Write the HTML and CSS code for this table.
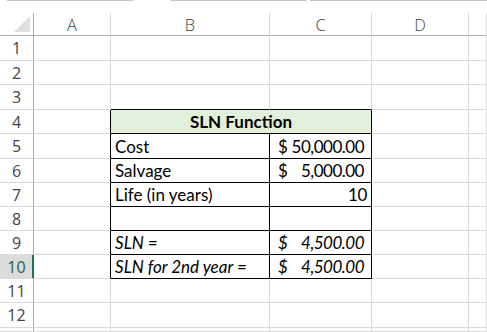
FILE: index.html
```html
<!DOCTYPE html>
<html>
<head>
<meta charset="utf-8">
<link rel="stylesheet" href="styles.css">
</head>
<body>
<div class="topbar"><div class="seg s1"></div><div class="seg s2"></div><div class="seg s3"></div></div>
<div class="sheet">
  <div class="c h corner"><div class="tri"></div></div>
  <div class="c h">A</div><div class="c h">B</div><div class="c h">C</div><div class="c h">D</div><div class="c h"></div>

  <div class="c r">1</div><div class="c"></div><div class="c"></div><div class="c"></div><div class="c"></div><div class="c"></div>
  <div class="c r">2</div><div class="c"></div><div class="c"></div><div class="c"></div><div class="c"></div><div class="c"></div>
  <div class="c r">3</div><div class="c"></div><div class="c bt"></div><div class="c bt"></div><div class="c"></div><div class="c"></div>

  <div class="c r">4</div><div class="c bl"></div><div class="c t title">SLN Function</div><div class="c"></div><div class="c"></div>

  <div class="c r">5</div><div class="c bl"></div><div class="c t txt">Cost</div><div class="c t acc"><span>$</span><span>50,000.00</span></div><div class="c"></div><div class="c"></div>
  <div class="c r">6</div><div class="c bl"></div><div class="c t txt">Salvage</div><div class="c t acc"><span>$</span><span>5,000.00</span></div><div class="c"></div><div class="c"></div>
  <div class="c r">7</div><div class="c bl"></div><div class="c t txt">Life (in years)</div><div class="c t num">10</div><div class="c"></div><div class="c"></div>
  <div class="c r">8</div><div class="c bl"></div><div class="c t txt"></div><div class="c t"></div><div class="c"></div><div class="c"></div>
  <div class="c r">9</div><div class="c bl"></div><div class="c t txt it">SLN =</div><div class="c t acc it"><span>$</span><span>4,500.00</span></div><div class="c"></div><div class="c"></div>
  <div class="c r sel">10</div><div class="c bl"></div><div class="c t txt it">SLN for 2nd year =</div><div class="c t acc it"><span>$</span><span>4,500.00</span></div><div class="c"></div><div class="c"></div>

  <div class="c r">11</div><div class="c"></div><div class="c"></div><div class="c"></div><div class="c"></div><div class="c"></div>
  <div class="c r">12</div><div class="c"></div><div class="c"></div><div class="c"></div><div class="c"></div><div class="c"></div>
  <div class="c r"></div><div class="c"></div><div class="c"></div><div class="c"></div><div class="c"></div><div class="c"></div>
</div>
</body>
</html>
```
FILE: styles.css
```css
html, body {
  margin: 0;
  padding: 0;
  background: #fff;
  overflow: hidden;
  width: 487px;
  height: 332px;
}
.topbar {
  height: 13px;
  display: flex;
  box-sizing: border-box;
}
.seg {
  border-top: 1px solid #c6c6c6;
  height: 0;
}
.s1 { margin-left: 7px; width: 126px; }
.s2 { margin-left: 37px; width: 137px; }
.s3 { margin-left: 3px; flex: 1; }

.sheet {
  display: grid;
  grid-template-columns: 34px 77px 159px 102px 97px 1fr;
  grid-template-rows: 23px 25px 24px 25px 24px 25px 24px 24px 24px 24px 24px 24px 25px 4px;
}
.c {
  box-sizing: border-box;
  border-right: 1px solid #dadada;
  border-bottom: 1px solid #dadada;
  font-family: Lato, "Liberation Sans", sans-serif;
  font-size: 17px;
  color: #000;
  min-width: 0;
  overflow: hidden;
  white-space: nowrap;
}
.h {
  border-bottom: 1px solid #ababab;
  display: flex;
  align-items: center;
  justify-content: center;
  font-family: "Open Sans", "Noto Sans", sans-serif;
  font-weight: 300;
  font-size: 16.5px;
  color: #444;
}
.corner {
  border-right: 1px solid #ababab;
  position: relative;
}
.tri {
  position: absolute;
  left: 14px;
  top: 3px;
  width: 16px;
  height: 16px;
  background: #dfdfdf;
  clip-path: polygon(100% 0, 100% 100%, 0 100%);
}
.r {
  border-right: 1px solid #ababab;
  display: flex;
  align-items: center;
  justify-content: center;
  font-family: "Open Sans", "Noto Sans", sans-serif;
  font-weight: 400;
  font-size: 16px;
  color: #444;
}
.r.sel {
  background: #dcdcdc;
  border-right: 1px solid #217346;
  box-shadow: inset -1px 0 0 #217346;
  color: #2b5f43;
}
.bt { border-bottom: 1px solid #000; }
.bl { border-right: 1px solid #000; }
.t {
  border-right: 1px solid #000;
  border-bottom: 1px solid #000;
  display: flex;
  align-items: flex-end;
  line-height: 20px;
  padding-bottom: 1px;
}
.title {
  grid-column: span 2;
  background: #e2efda;
  font-weight: bold;
  justify-content: center;
}
.txt { padding-left: 4px; }
.acc {
  justify-content: space-between;
  padding-left: 8px;
  padding-right: 7px;
  letter-spacing: -0.5px;
}
.num {
  justify-content: flex-end;
  padding-right: 4px;
  letter-spacing: -0.3px;
}
.it { font-style: italic; }
```
